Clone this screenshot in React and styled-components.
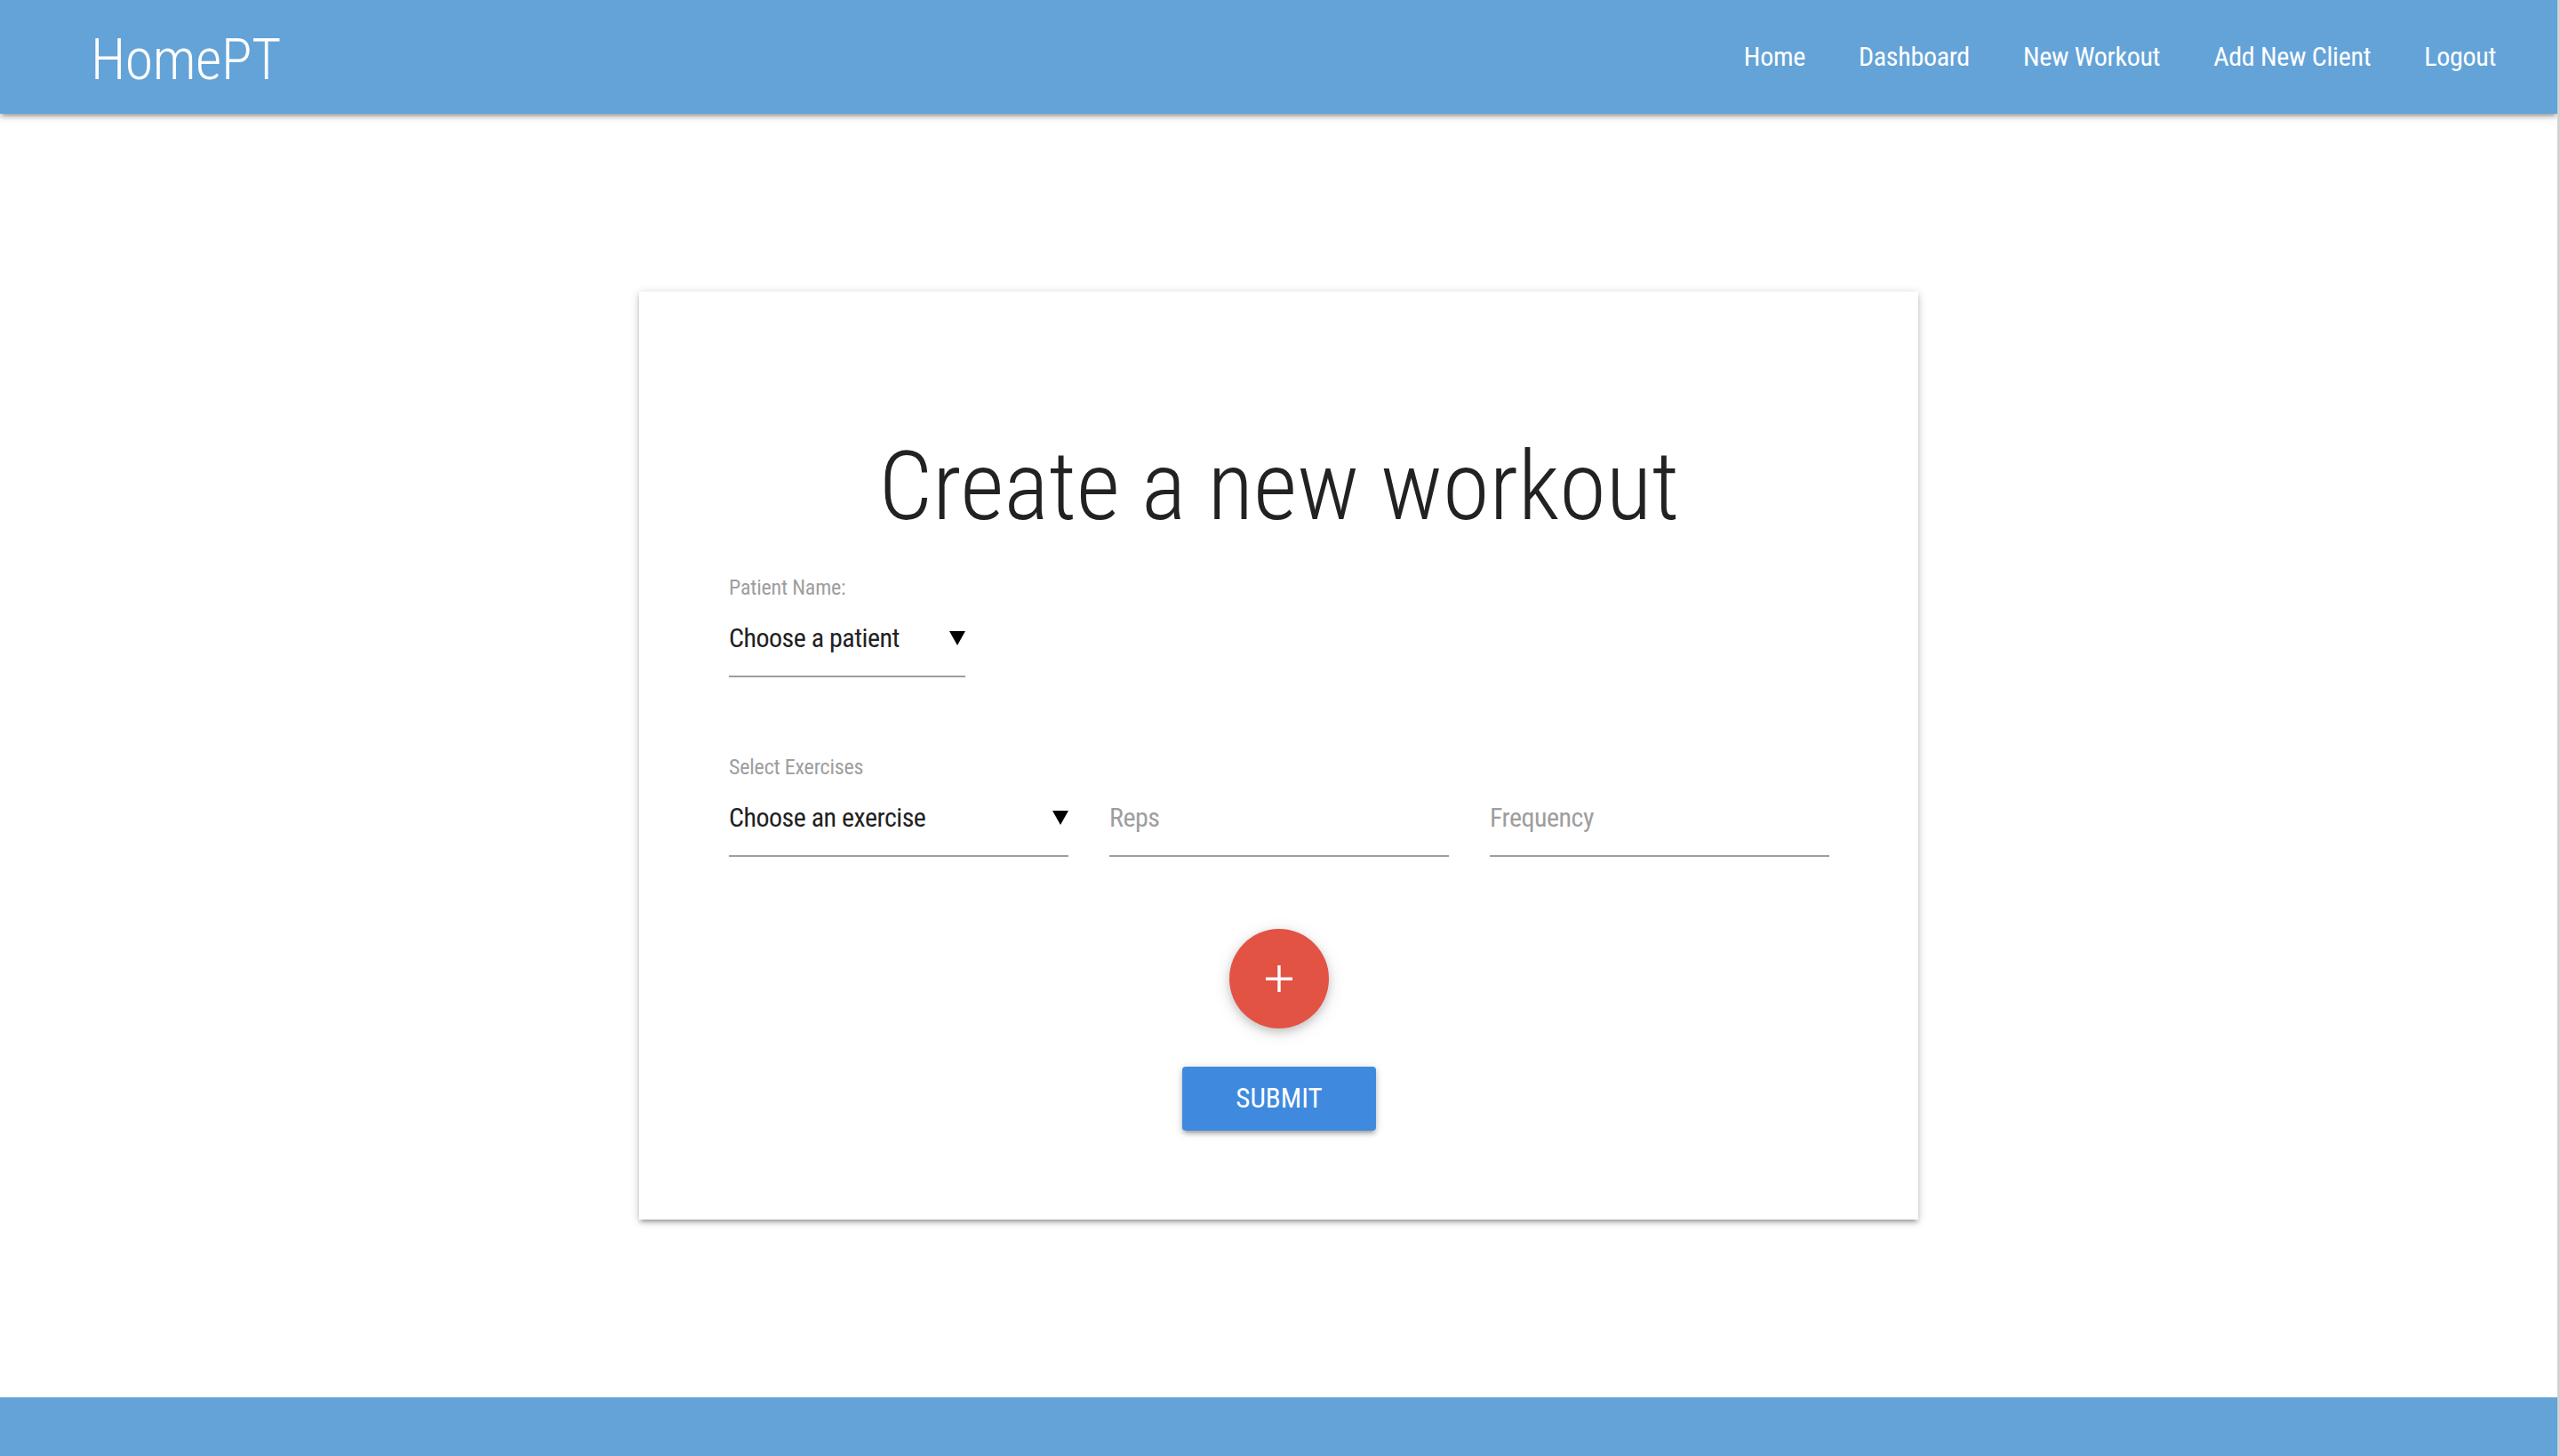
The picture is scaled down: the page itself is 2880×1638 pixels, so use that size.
import React from "react";
import styled, { createGlobalStyle } from "styled-components";

const FONT = `Roboto, "Liberation Sans", sans-serif`;

const GlobalStyle = createGlobalStyle`
  html, body { margin: 0; padding: 0; background: #ffffff; }
  body {
    font-family: ${FONT};
    font-stretch: 75%;
    color: #222222;
  }
  * { box-sizing: border-box; }
`;

const Page = styled.div`
  width: 2880px;
  height: 1638px;
  overflow: hidden;
  border-right: 3px solid #d2d2d2;
  display: flex;
  flex-direction: column;
  background: #ffffff;
`;

const NavBar = styled.nav`
  height: 128px;
  flex: none;
  background: #64a3d8;
  display: flex;
  align-items: flex-start;
  justify-content: space-between;
  padding: 0 39px 0 102px;
  box-shadow: 0 4px 4px 0 rgba(0, 0, 0, 0.14), 0 6px 2px -4px rgba(0, 0, 0, 0.12),
    0 2px 10px 0 rgba(0, 0, 0, 0.2);
  position: relative;
  z-index: 2;
`;

const Brand = styled.a`
  font-family: ${FONT};
  font-stretch: 75%;
  font-weight: 350;
  font-size: 64px;
  letter-spacing: -0.5px;
  line-height: 136px;
  height: 128px;
  color: #ffffff;
  text-decoration: none;
`;

const NavLinks = styled.ul`
  list-style: none;
  margin: 0;
  padding: 0;
  display: flex;
`;

const NavLink = styled.li`
  font-family: ${FONT};
  font-stretch: 75%;
  font-size: 30px;
  letter-spacing: -0.3px;
  line-height: 128px;
  padding: 0 30px;
  color: #ffffff;
`;

const Main = styled.main`
  flex: 1;
  display: flex;
  justify-content: center;
  align-items: flex-start;
  padding-top: 200px;
`;

const Card = styled.section`
  width: 1439px;
  height: 1044px;
  background: #ffffff;
  padding: 0 100px 0 101px;
  display: flex;
  flex-direction: column;
  box-shadow: 0 4px 4px 0 rgba(0, 0, 0, 0.14), 0 6px 2px -4px rgba(0, 0, 0, 0.12),
    0 2px 10px 0 rgba(0, 0, 0, 0.2);
`;

const Title = styled.h1`
  font-family: ${FONT};
  font-stretch: 75%;
  font-weight: 300;
  font-size: 107px;
  line-height: 123px;
  margin: 158px 0 0;
  text-align: center;
  color: #222222;
`;

const FieldLabel = styled.div`
  font-family: ${FONT};
  font-stretch: 75%;
  font-size: 24px;
  letter-spacing: -0.2px;
  line-height: 28.8px;
  color: #9e9e9e;
  margin-top: ${(p) => p.$top}px;
  margin-bottom: 22px;
`;

const Field = styled.div`
  width: ${(p) => (p.$width ? `${p.$width}px` : "auto")};
  height: 64px;
  padding-bottom: 22px;
  border-bottom: 2px solid #9e9e9e;
  display: flex;
  align-items: center;
  justify-content: space-between;
`;

const FieldText = styled.span`
  font-family: ${FONT};
  font-stretch: 75%;
  font-size: 30px;
  letter-spacing: -0.5px;
  line-height: 40px;
  color: ${(p) => (p.$placeholder ? "#9e9e9e" : "#222222")};
`;

const ExerciseRow = styled.div`
  display: grid;
  grid-template-columns: 382px 382px 382px;
  column-gap: 46px;
`;

const Actions = styled.div`
  display: flex;
  flex-direction: column;
  align-items: center;
  margin-top: 81px;
`;

const Fab = styled.button`
  width: 112px;
  height: 112px;
  border-radius: 50%;
  border: none;
  padding: 0;
  background: #e25344;
  display: flex;
  align-items: center;
  justify-content: center;
  box-shadow: 0 4px 10px 0 rgba(0, 0, 0, 0.16), 0 4px 20px 0 rgba(0, 0, 0, 0.12);
`;

const SubmitButton = styled.button`
  margin-top: 43px;
  width: 218px;
  height: 72px;
  border: none;
  border-radius: 4px;
  background: #3f8ade;
  color: #ffffff;
  font-family: ${FONT};
  font-stretch: 75%;
  font-size: 31px;
  letter-spacing: 0;
  text-transform: uppercase;
  box-shadow: 0 4px 4px 0 rgba(0, 0, 0, 0.14), 0 6px 2px -4px rgba(0, 0, 0, 0.12),
    0 2px 10px 0 rgba(0, 0, 0, 0.2);
`;

const Footer = styled.footer`
  flex: none;
  height: 66px;
  background: #64a3d8;
`;

const Caret = () => (
  <svg width="18" height="18" viewBox="0 0 18 18" style={{ flex: "none" }}>
    <polygon points="0,1 18,1 9,17" fill="#000000" />
  </svg>
);

const Plus = () => (
  <svg width="30" height="30" viewBox="0 0 30 30">
    <rect x="0" y="13.5" width="30" height="3.4" fill="#ffffff" />
    <rect x="13.3" y="0" width="3.4" height="30" fill="#ffffff" />
  </svg>
);

export default function App() {
  const links = ["Home", "Dashboard", "New Workout", "Add New Client", "Logout"];
  return (
    <>
      <GlobalStyle />
      <Page>
        <NavBar>
          <Brand>HomePT</Brand>
          <NavLinks>
            {links.map((l) => (
              <NavLink key={l}>{l}</NavLink>
            ))}
          </NavLinks>
        </NavBar>
        <Main>
          <Card>
            <Title>Create a new workout</Title>
            <FieldLabel $top={38}>Patient Name:</FieldLabel>
            <Field $width={266}>
              <FieldText>Choose a patient</FieldText>
              <Caret />
            </Field>
            <FieldLabel $top={87}>Select Exercises</FieldLabel>
            <ExerciseRow>
              <Field>
                <FieldText>Choose an exercise</FieldText>
                <Caret />
              </Field>
              <Field>
                <FieldText $placeholder>Reps</FieldText>
              </Field>
              <Field>
                <FieldText $placeholder>Frequency</FieldText>
              </Field>
            </ExerciseRow>
            <Actions>
              <Fab aria-label="add">
                <Plus />
              </Fab>
              <SubmitButton>Submit</SubmitButton>
            </Actions>
          </Card>
        </Main>
        <Footer />
      </Page>
    </>
  );
}
